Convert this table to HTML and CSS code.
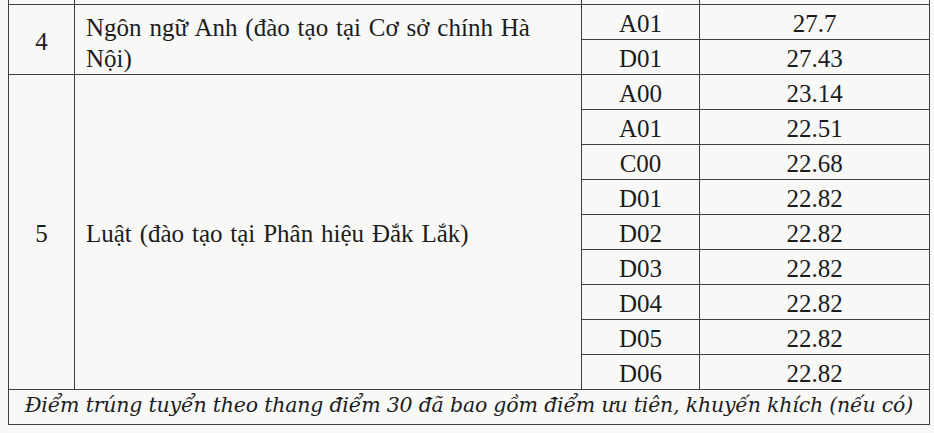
FILE: index.html
```html
<!DOCTYPE html>
<html lang="vi">
<head>
<meta charset="utf-8">
<title>Điểm trúng tuyển</title>
<link rel="stylesheet" href="styles.css">
</head>
<body>
<div class="sheet">
<table class="scores">
  <colgroup>
    <col class="c-stt">
    <col class="c-name">
    <col class="c-combo">
    <col class="c-score">
  </colgroup>
  <tbody>
    <tr class="tail">
      <td></td><td></td><td></td><td></td>
    </tr>
    <tr>
      <td class="stt" rowspan="2">4</td>
      <td class="name two" rowspan="2">Ngôn ngữ Anh (đào tạo tại Cơ sở chính Hà Nội)</td>
      <td class="combo">A01</td>
      <td class="score">27.7</td>
    </tr>
    <tr>
      <td class="combo">D01</td>
      <td class="score">27.43</td>
    </tr>
    <tr>
      <td class="stt mid" rowspan="9">5</td>
      <td class="name mid" rowspan="9">Luật (đào tạo tại Phân hiệu Đắk Lắk)</td>
      <td class="combo">A00</td>
      <td class="score">23.14</td>
    </tr>
    <tr><td class="combo">A01</td><td class="score">22.51</td></tr>
    <tr><td class="combo">C00</td><td class="score">22.68</td></tr>
    <tr><td class="combo">D01</td><td class="score">22.82</td></tr>
    <tr><td class="combo">D02</td><td class="score">22.82</td></tr>
    <tr><td class="combo">D03</td><td class="score">22.82</td></tr>
    <tr><td class="combo">D04</td><td class="score">22.82</td></tr>
    <tr><td class="combo">D05</td><td class="score">22.82</td></tr>
    <tr><td class="combo">D06</td><td class="score">22.82</td></tr>
    <tr class="foot">
      <td colspan="4" class="note">Điểm trúng tuyển theo thang điểm 30 đã bao gồm điểm ưu tiên, khuyến khích (nếu có)</td>
    </tr>
  </tbody>
</table>
</div>
</body>
</html>
```
FILE: styles.css
```css
html, body {
  margin: 0;
  padding: 0;
  background: #f8f8f7;
}
.sheet {
  width: 934px;
  height: 433px;
  overflow: hidden;
  padding-left: 8px;
  box-sizing: border-box;
}
.scores {
  border-collapse: collapse;
  table-layout: fixed;
  width: 921px;
  font-family: "Liberation Serif", "Times New Roman", serif;
  font-size: 25px;
  color: #1c1c1c;
}
.c-stt { width: 66px; }
.c-name { width: 507px; }
.c-combo { width: 118px; }
.c-score { width: 230px; }
.scores td {
  border: 1.5px solid #3e3e3e;
  padding: 5px 0 0;
  height: 35px;
  box-sizing: border-box;
  line-height: 28px;
  vertical-align: middle;
  white-space: nowrap;
}
.scores tr.tail td {
  border-top: none;
  height: 4px;
  padding: 0;
  line-height: 0;
}
.stt, .combo, .score { text-align: center; }
.name {
  padding-left: 11px !important;
  word-spacing: 1.6px;
}
.name.two {
  white-space: normal;
  vertical-align: top;
  line-height: 31px;
  padding-top: 7px;
  padding-right: 30px;
}
.note {
  font-family: "DejaVu Serif", "Liberation Serif", serif;
  font-style: italic;
  font-size: 20.5px;
  text-align: center;
  padding: 0 0 3px !important;
  height: 35px;
  letter-spacing: -0.2px;
}
```
